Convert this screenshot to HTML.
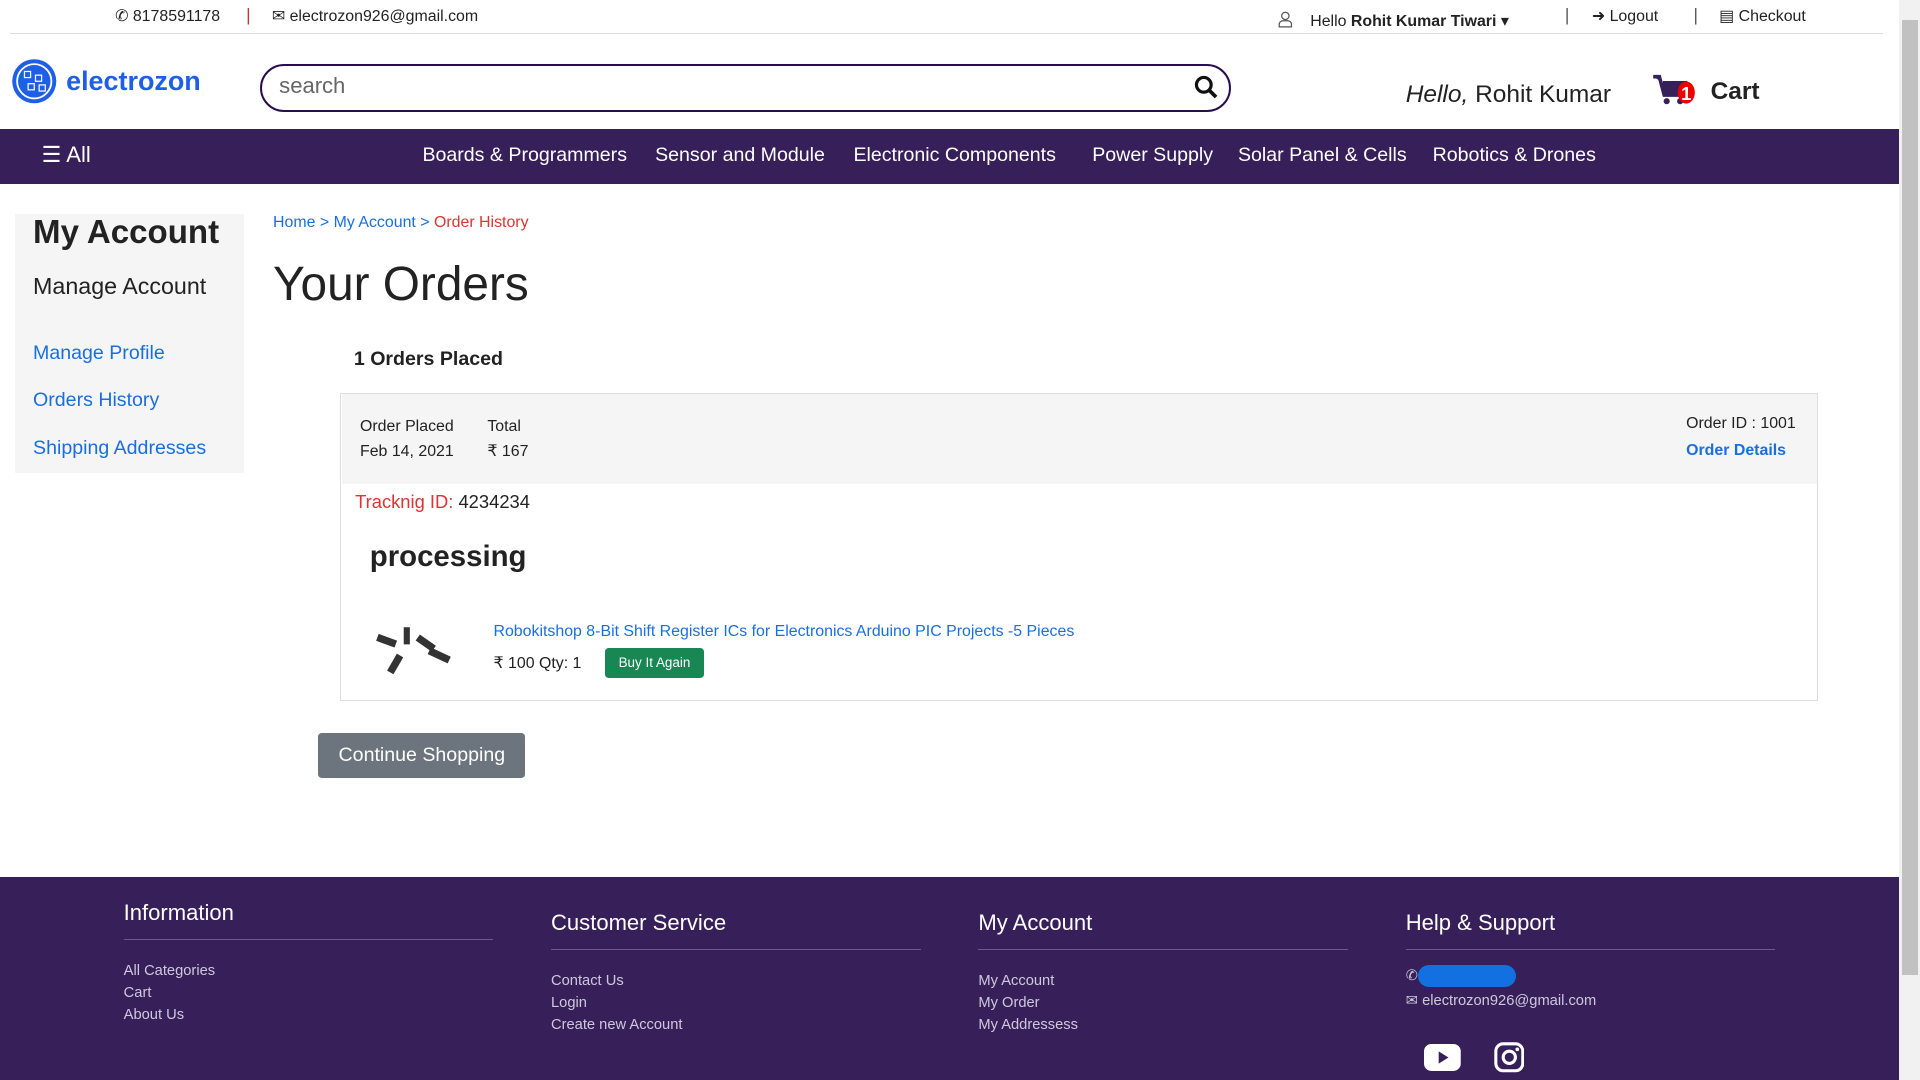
<!DOCTYPE html>
<html><head><meta charset="utf-8"><style>
html,body{margin:0;padding:0;overflow:hidden;background:#fff}
#w{zoom:1.22449;width:1568px;height:882px;position:relative;font-family:"Liberation Sans",sans-serif;color:#222;overflow:hidden}
.a{position:absolute;white-space:nowrap}
.nav .a{color:#fff;font-size:16px;top:118px}
.blue{color:#1a6fe0}
.ft{color:#fff;font-size:18px}
.fl{color:#cfc8dc;font-size:12px}
.hr{position:absolute;height:1px;background:#6b5a8c;width:302px}
</style></head><body><div id="w">
<!-- top bar -->
<div class="a" style="left:94px;top:5px;font-size:13px">&#9990; 8178591178</div>
<div class="a" style="left:201px;top:4px;font-size:14px;color:#c33">|</div>
<div class="a" style="left:222px;top:5px;font-size:13px">&#9993; electrozon926@gmail.com</div>
<svg class="a" style="left:1044px;top:9px" width="12" height="14" viewBox="0 0 12 14"><circle cx="6" cy="4" r="3" fill="none" stroke="#555"/><path d="M1 13v-2a3 3 0 0 1 3-3h4a3 3 0 0 1 3 3v2z" fill="none" stroke="#555"/></svg>
<div class="a" style="left:1070px;top:9px;font-size:13px">Hello <b>Rohit Kumar Tiwari</b> &#9662;</div>
<div class="a" style="left:1278px;top:4px;font-size:14px;color:#555">|</div>
<div class="a" style="left:1300px;top:5px;font-size:13px">&#10140; Logout</div>
<div class="a" style="left:1383px;top:4px;font-size:14px;color:#555">|</div>
<div class="a" style="left:1404px;top:5px;font-size:13px">&#9636; Checkout</div>
<div class="a" style="left:8px;top:27px;width:1530px;height:1px;background:#ddd"></div>
<!-- logo -->
<svg class="a" style="left:9px;top:47px" width="38" height="38" viewBox="0 0 38 38"><circle cx="19" cy="19" r="18" fill="#1f5fe6"/><circle cx="19" cy="19" r="14" fill="none" stroke="#fff" stroke-width="1.5"/><rect x="11" y="11" width="5" height="5" fill="none" stroke="#fff"/><rect x="20" y="14" width="5" height="5" fill="none" stroke="#fff"/><rect x="14" y="21" width="5" height="5" fill="none" stroke="#fff"/><rect x="23" y="22" width="5" height="5" fill="none" stroke="#fff"/></svg>
<div class="a" style="left:54px;top:54px;font-size:22px;font-weight:bold;color:#1f5fe6">electrozon</div>
<div class="a" style="left:212px;top:52px;width:790px;height:36px;border:2px solid #2a0d4f;border-radius:20px"></div>
<div class="a" style="left:228px;top:60px;font-size:18px;color:#666">search</div>
<svg class="a" style="left:975px;top:61px" width="20" height="20" viewBox="0 0 20 20"><circle cx="8" cy="8" r="6" fill="none" stroke="#111" stroke-width="2.6"/><path d="M12.5 12.5l5.5 5.5" stroke="#111" stroke-width="3"/></svg>
<div class="a" style="left:1148px;top:66px;font-size:20px"><i>Hello,</i> Rohit Kumar</div>
<svg class="a" style="left:1349px;top:60px" width="38" height="28" viewBox="0 0 38 28"><path d="M1 3h5l4 15h14l3-10H9" fill="#37205a" stroke="#37205a" stroke-width="3"/><circle cx="12" cy="23" r="2.5" fill="#37205a"/><circle cx="23" cy="23" r="2.5" fill="#37205a"/><ellipse cx="28" cy="16" rx="7" ry="9" fill="#e00"/><text x="28" y="22" font-size="15" font-weight="bold" fill="#fff" text-anchor="middle" font-family="Liberation Sans">1</text></svg>
<div class="a" style="left:1397px;top:64px;font-size:20px;font-weight:bold">Cart</div>
<!-- nav -->
<div class="nav"><div class="a" style="left:0;top:105px;width:1551px;height:45px;background:#37205a"></div>
<div class="a" style="left:34px;top:116px;font-size:18px">&#9776; All</div>
<div class="a" style="left:345px">Boards &amp; Programmers</div>
<div class="a" style="left:535px">Sensor and Module</div>
<div class="a" style="left:697px">Electronic Components</div>
<div class="a" style="left:892px">Power Supply</div>
<div class="a" style="left:1011px">Solar Panel &amp; Cells</div>
<div class="a" style="left:1170px">Robotics &amp; Drones</div></div>
<!-- sidebar -->
<div class="a" style="left:12px;top:175px;width:187px;height:211px;background:#f5f5f5"></div>
<div class="a" style="left:27px;top:175px;font-size:27px;font-weight:bold;color:#222">My Account</div>
<div class="a" style="left:27px;top:223px;font-size:19px">Manage Account</div>
<div class="a blue" style="left:27px;top:279px;font-size:16px">Manage Profile</div>
<div class="a blue" style="left:27px;top:318px;font-size:16px">Orders History</div>
<div class="a blue" style="left:27px;top:357px;font-size:16px">Shipping Addresses</div>
<!-- main -->
<div class="a" style="left:223px;top:175px;font-size:13px"><span class="blue">Home</span> <span class="blue">&gt;</span> <span class="blue">My Account</span> <span class="blue">&gt;</span> <span style="color:#d33">Order History</span></div>
<div class="a" style="left:223px;top:210px;font-size:39px">Your Orders</div>
<div class="a" style="left:289px;top:284px;font-size:16px;font-weight:bold">1 Orders Placed</div>
<div class="a" style="left:278px;top:321px;width:1205px;height:250px;border:1px solid #ddd"></div>
<div class="a" style="left:279px;top:322px;width:1205px;height:73px;background:#f5f5f5"></div>
<div class="a" style="left:294px;top:339px;font-size:13px;line-height:20px">Order Placed<br>Feb 14, 2021</div>
<div class="a" style="left:398px;top:339px;font-size:13px;line-height:20px">Total<br>&#8377; 167</div>
<div class="a" style="left:1377px;top:339px;font-size:13px">Order ID : 1001</div>
<div class="a blue" style="left:1377px;top:361px;font-size:13px;font-weight:bold">Order Details</div>
<div class="a" style="left:290px;top:401px;font-size:15px"><span style="color:#d33">Tracknig ID:</span> 4234234</div>
<div class="a" style="left:302px;top:441px;font-size:24px;font-weight:bold;color:#222">processing</div>
<svg class="a" style="left:300px;top:502px" width="82" height="62" viewBox="0 0 82 62"><g fill="#333"><rect x="8" y="18" width="16" height="6" transform="rotate(20 16 21)"/><rect x="30" y="10" width="5" height="14"/><rect x="40" y="20" width="16" height="6" transform="rotate(35 48 23)"/><rect x="20" y="32" width="6" height="16" transform="rotate(30 23 40)"/><rect x="50" y="30" width="18" height="6" transform="rotate(25 59 33)"/></g></svg>
<div class="a blue" style="left:403px;top:509px;font-size:13px">Robokitshop 8-Bit Shift Register ICs for Electronics Arduino PIC Projects -5 Pieces</div>
<div class="a" style="left:403px;top:533px;font-size:13px">&#8377; 100 Qty: 1</div>
<div class="a" style="left:494px;top:529px;width:81px;height:25px;background:#198754;border-radius:3px;color:#fff;font-size:11px;text-align:center;line-height:25px">Buy It Again</div>
<div class="a" style="left:260px;top:599px;width:169px;height:36px;background:#6c757d;border-radius:3px;color:#fff;font-size:16px;text-align:center;line-height:36px">Continue Shopping</div>
<!-- footer -->
<div class="a" style="left:0;top:716px;width:1551px;height:166px;background:#37205a"></div>
<div class="a ft" style="left:101px;top:735px">Information</div>
<div class="hr" style="left:101px;top:767px"></div>
<div class="a fl" style="left:101px;top:784px;line-height:18px">All Categories<br>Cart<br>About Us</div>
<div class="a ft" style="left:450px;top:743px">Customer Service</div>
<div class="hr" style="left:450px;top:775px"></div>
<div class="a fl" style="left:450px;top:792px;line-height:18px">Contact Us<br>Login<br>Create new Account</div>
<div class="a ft" style="left:799px;top:743px">My Account</div>
<div class="hr" style="left:799px;top:775px"></div>
<div class="a fl" style="left:799px;top:792px;line-height:18px">My Account<br>My Order<br>My Addressess</div>
<div class="a ft" style="left:1148px;top:743px">Help &amp; Support</div>
<div class="hr" style="left:1148px;top:775px"></div>
<div class="a fl" style="left:1148px;top:790px">&#9990;</div>
<div class="a" style="left:1158px;top:788px;width:80px;height:18px;background:#1270e0;border-radius:9px"></div>
<div class="a fl" style="left:1148px;top:810px">&#9993; electrozon926@gmail.com</div>
<svg class="a" style="left:1163px;top:853px" width="30" height="22" viewBox="0 0 30 22"><rect width="30" height="22" rx="6" fill="#fff"/><path d="M12 6v10l8-5z" fill="#37205a"/></svg>
<svg class="a" style="left:1220px;top:851px" width="25" height="25" viewBox="0 0 25 25"><rect x="1.5" y="1.5" width="22" height="22" rx="6" fill="none" stroke="#fff" stroke-width="2.5"/><circle cx="12.5" cy="12.5" r="5" fill="none" stroke="#fff" stroke-width="2.5"/><circle cx="19" cy="6" r="1.5" fill="#fff"/></svg>
<!-- scrollbar -->
<div class="a" style="left:1551px;top:0;width:17px;height:882px;background:#f1f1f1"></div>
<div class="a" style="left:1553px;top:16px;width:13px;height:780px;background:#c1c1c1"></div>
</div></body></html>
